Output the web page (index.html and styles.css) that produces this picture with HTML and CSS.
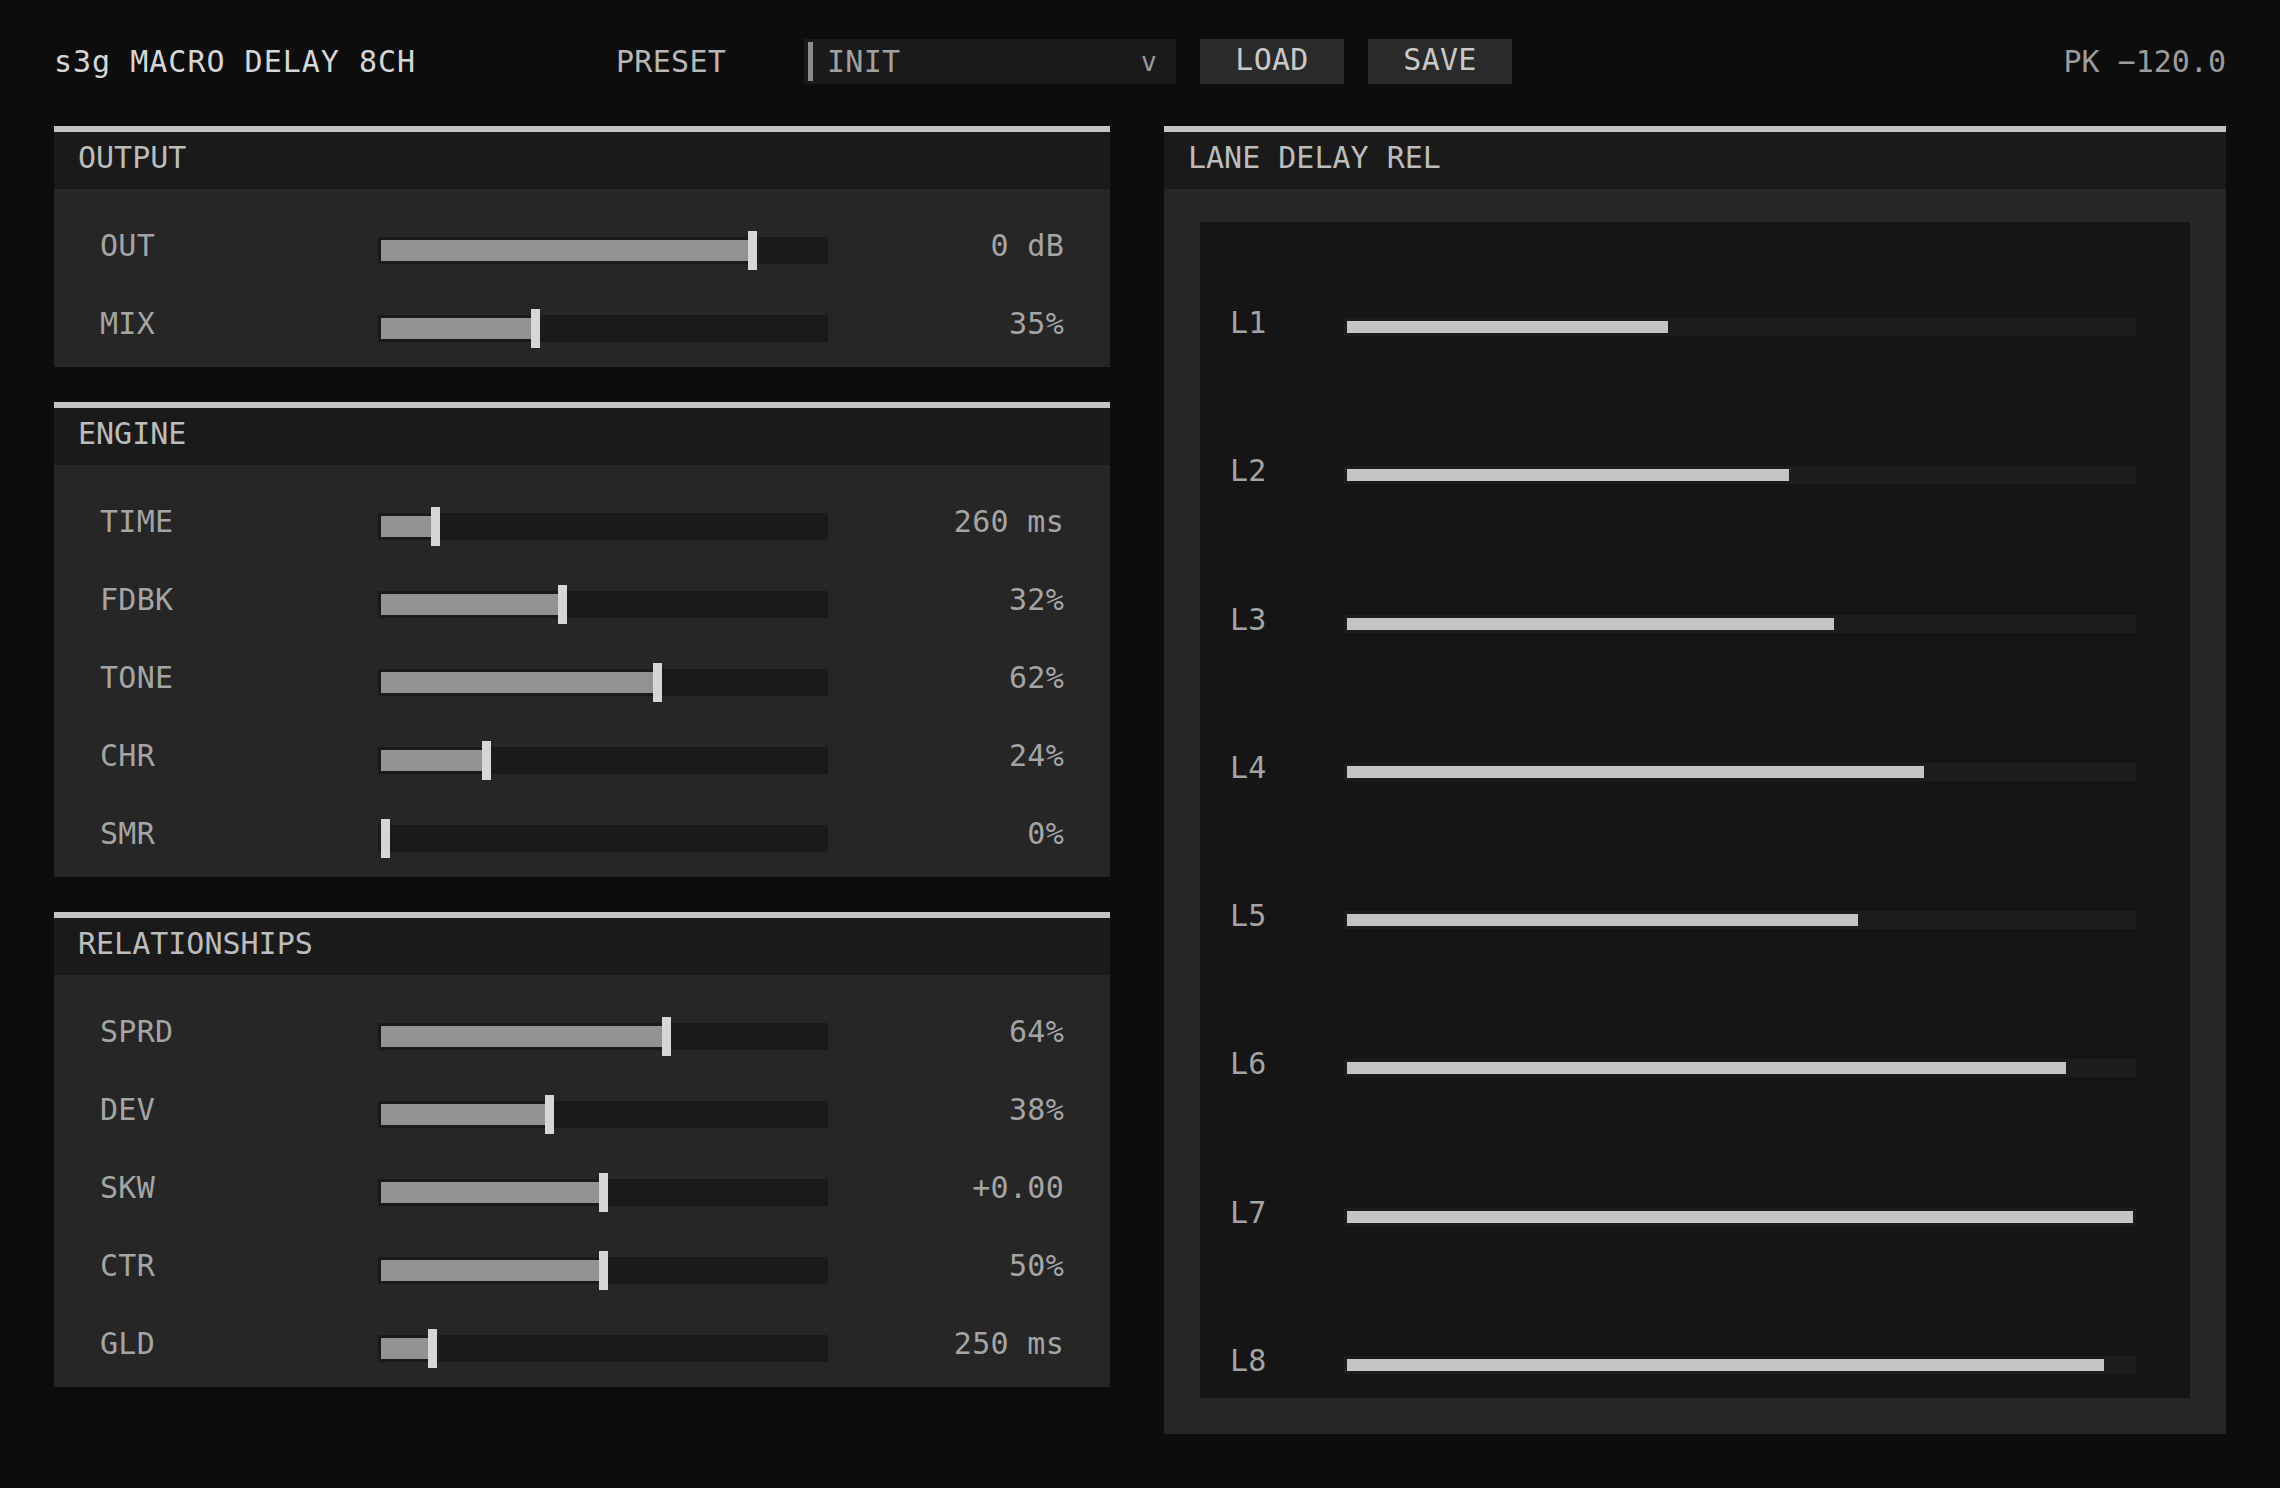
FILE: index.html
```html
<!DOCTYPE html>
<html>
<head>
<meta charset="utf-8">
<link rel="stylesheet" href="styles.css">
</head>
<body>
<div class="app">
  <header class="topbar">
    <div class="title">s3g MACRO DELAY 8CH</div>
    <div class="preset-label">PRESET</div>
    <div class="dropdown"><span class="accent"></span><span class="dd-text">INIT</span><span class="caret">v</span></div>
    <button class="btn">LOAD</button>
    <button class="btn">SAVE</button>
    <div class="peak">PK −120.0</div>
  </header>
  <main class="columns">
    <div class="left">
      <section class="panel">
        <div class="panel-head"><span>OUTPUT</span></div>
        <div class="panel-body">
          <div class="row"><span class="lbl">OUT</span><div class="track" style="--p:0.833"><div class="fill"></div><div class="handle"></div></div><span class="val">0 dB</span></div>
          <div class="row"><span class="lbl">MIX</span><div class="track" style="--p:0.35"><div class="fill"></div><div class="handle"></div></div><span class="val">35%</span></div>
        </div>
      </section>
      <section class="panel">
        <div class="panel-head"><span>ENGINE</span></div>
        <div class="panel-body">
          <div class="row"><span class="lbl">TIME</span><div class="track" style="--p:0.128"><div class="fill"></div><div class="handle"></div></div><span class="val">260 ms</span></div>
          <div class="row"><span class="lbl">FDBK</span><div class="track" style="--p:0.41"><div class="fill"></div><div class="handle"></div></div><span class="val">32%</span></div>
          <div class="row"><span class="lbl">TONE</span><div class="track" style="--p:0.62"><div class="fill"></div><div class="handle"></div></div><span class="val">62%</span></div>
          <div class="row"><span class="lbl">CHR</span><div class="track" style="--p:0.24"><div class="fill"></div><div class="handle"></div></div><span class="val">24%</span></div>
          <div class="row"><span class="lbl">SMR</span><div class="track" style="--p:0"><div class="fill"></div><div class="handle"></div></div><span class="val">0%</span></div>
        </div>
      </section>
      <section class="panel">
        <div class="panel-head"><span>RELATIONSHIPS</span></div>
        <div class="panel-body">
          <div class="row"><span class="lbl">SPRD</span><div class="track" style="--p:0.64"><div class="fill"></div><div class="handle"></div></div><span class="val">64%</span></div>
          <div class="row"><span class="lbl">DEV</span><div class="track" style="--p:0.38"><div class="fill"></div><div class="handle"></div></div><span class="val">38%</span></div>
          <div class="row"><span class="lbl">SKW</span><div class="track" style="--p:0.5"><div class="fill"></div><div class="handle"></div></div><span class="val">+0.00</span></div>
          <div class="row"><span class="lbl">CTR</span><div class="track" style="--p:0.5"><div class="fill"></div><div class="handle"></div></div><span class="val">50%</span></div>
          <div class="row"><span class="lbl">GLD</span><div class="track" style="--p:0.12"><div class="fill"></div><div class="handle"></div></div><span class="val">250 ms</span></div>
        </div>
      </section>
    </div>
    <div class="right">
      <section class="panel">
        <div class="panel-head"><span>LANE DELAY REL</span></div>
        <div class="panel-body lanes-body">
          <div class="lanes">
            <div class="lane"><span class="lane-lbl">L1</span><div class="lane-track"><div class="lane-fill" style="width:40.9%"></div></div></div>
            <div class="lane"><span class="lane-lbl">L2</span><div class="lane-track"><div class="lane-fill" style="width:56.2%"></div></div></div>
            <div class="lane"><span class="lane-lbl">L3</span><div class="lane-track"><div class="lane-fill" style="width:61.9%"></div></div></div>
            <div class="lane"><span class="lane-lbl">L4</span><div class="lane-track"><div class="lane-fill" style="width:73.4%"></div></div></div>
            <div class="lane"><span class="lane-lbl">L5</span><div class="lane-track"><div class="lane-fill" style="width:65%"></div></div></div>
            <div class="lane"><span class="lane-lbl">L6</span><div class="lane-track"><div class="lane-fill" style="width:91.5%"></div></div></div>
            <div class="lane"><span class="lane-lbl">L7</span><div class="lane-track"><div class="lane-fill" style="width:100%"></div></div></div>
            <div class="lane"><span class="lane-lbl">L8</span><div class="lane-track"><div class="lane-fill" style="width:96.3%"></div></div></div>
          </div>
        </div>
      </section>
    </div>
  </main>
</div>
</body>
</html>
```

FILE: styles.css
```css
html, body {
  margin: 0;
  padding: 0;
  background: #0d0d0d;
}

body {
  font-family: "DejaVu Sans Mono", "Liberation Mono", monospace;
  font-size: 30px;
  letter-spacing: 0.3px;
  color: #a4a4a4;
}

.app {
  padding: 39px 54px 0 54px;
}

/* top bar */
.topbar {
  display: flex;
  align-items: center;
  height: 45px;
  margin-bottom: 42px;
}

.title {
  width: 562px;
  flex: none;
  color: #d6d6d6;
  letter-spacing: 1px;
}

.preset-label {
  width: 188px;
  flex: none;
  color: #b8b8b8;
}

.dropdown {
  width: 372px;
  height: 45px;
  box-sizing: border-box;
  background: #1a1a1a;
  display: flex;
  align-items: center;
  padding: 3px 19px 3px 4px;
  flex: none;
}

.accent {
  width: 5px;
  align-self: stretch;
  background: #8c8c8c;
  flex: none;
}

.dd-text {
  margin-left: 14px;
  flex: 1;
  color: #a0a0a0;
}

.caret {
  color: #9a9a9a;
  font-size: 26px;
}

.btn {
  margin-left: 24px;
  width: 144px;
  height: 45px;
  border: 0;
  padding: 0 0 4px 0;
  background: #2a2a2a;
  color: #c8c8c8;
  font-family: inherit;
  font-size: 30px;
  letter-spacing: 0.3px;
  flex: none;
}

.peak {
  margin-left: auto;
  color: #9c9c9c;
  letter-spacing: 0;
}

/* columns */
.columns {
  display: flex;
  align-items: flex-start;
  gap: 54px;
}

.left {
  width: 1056px;
  flex: none;
  display: flex;
  flex-direction: column;
  gap: 35px;
}

.right {
  flex: 1;
}

.panel {
  border-top: 6px solid #c4c4c4;
}

.panel-head {
  height: 57px;
  background: #1a1a1a;
  display: flex;
  align-items: center;
  padding: 0 24px;
  color: #bcbcbc;
  letter-spacing: 0;
}

.panel-head span {
  margin-bottom: 7px;
}

.panel-body {
  background: #262626;
  padding: 22px 46px 0 46px;
}

.row {
  display: flex;
  align-items: center;
  height: 78px;
}

.lbl {
  width: 278px;
  flex: none;
  line-height: 30px;
  margin-bottom: 9px;
  color: #a4a4a4;
}

.val {
  flex: 1;
  text-align: right;
  line-height: 30px;
  margin-bottom: 9px;
  color: #a4a4a4;
}

.track {
  position: relative;
  width: 450px;
  height: 27px;
  box-sizing: border-box;
  padding: 3px;
  background: #1a1a1a;
  flex: none;
}

.fill {
  height: 21px;
  width: max(0px, calc(var(--p) * 450px - 3px));
  background: #929292;
}

.handle {
  position: absolute;
  top: -6px;
  left: max(3px, calc(var(--p) * 450px - 4.5px));
  width: 9px;
  height: 39px;
  background: #d6d6d6;
}

/* lanes */
.lanes-body {
  padding: 33px 36px 36px 36px;
}

.lanes {
  height: 1176px;
  box-sizing: border-box;
  background: #151515;
  padding: 96px 54px 24px 30px;
  display: flex;
  flex-direction: column;
  justify-content: space-between;
}

.lane {
  display: flex;
  align-items: center;
  height: 18px;
}

.lane-lbl {
  width: 114px;
  flex: none;
  line-height: 18px;
  margin-bottom: 8px;
  color: #a4a4a4;
}

.lane-track {
  flex: 1;
  height: 18px;
  box-sizing: border-box;
  padding: 3px;
  background: #1d1d1d;
}

.lane-fill {
  height: 12px;
  background: #c4c4c4;
}
```
